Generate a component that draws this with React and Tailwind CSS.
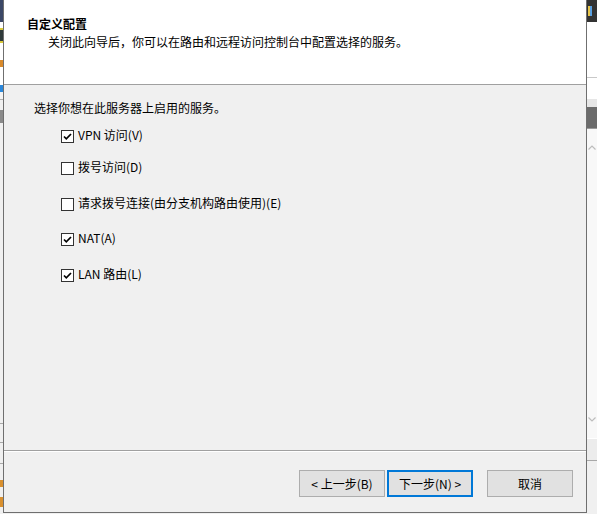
import React from 'react';

const font = { fontFamily: '"Noto Sans CJK SC", "Noto Sans", sans-serif' };

const services = [
  { label: 'VPN 访问(V)', checked: true, mt: 'mt-[14px]' },
  { label: '拨号访问(D)', checked: false, mt: 'mt-[19px]' },
  { label: '请求拨号连接(由分支机构路由使用)(E)', checked: false, mt: 'mt-[23px]' },
  { label: 'NAT(A)', checked: true, mt: 'mt-[22px]' },
  { label: 'LAN 路由(L)', checked: true, mt: 'mt-[23px]' },
];

const CheckBox = ({ checked }) => (
  <span className="w-[13px] h-[13px] border border-[#333] bg-white flex items-center justify-center shrink-0">
    {checked && (
      <svg width="11" height="11" viewBox="0 0 11 11">
        <path d="M2 5.5 L4.3 7.8 L9 3" fill="none" stroke="#000" strokeWidth="1.7" />
      </svg>
    )}
  </span>
);

const Button = ({ children, focused }) => (
  <button
    className={`w-[86px] h-[27px] text-[12px] text-black flex items-center justify-center bg-[#e1e1e1] ${
      focused ? 'border-2 border-[#0078d7]' : 'border border-[#adadad]'
    }`}
  >
    {children}
  </button>
);

// slivers of the windows behind the dialog
const LeftStrip = () => (
  <div className="w-[3px] flex flex-col bg-[#f0f0f0]">
    <div className="h-[22px] bg-[#3b4766]" />
    <div className="h-[6px] bg-white" />
    <div className="h-[15px] bg-[#2f3a3a] border-y-2 border-[#d8c83a]" />
    <div className="h-[17px] bg-white" />
    <div className="h-[7px] bg-[#d98a2b]" />
    <div className="h-[18px] bg-white" />
    <div className="h-[7px] bg-[#2a88dc]" />
    <div className="h-[8px] bg-[#f4f4f4] border-b border-[#b0b0b0]" />
    <div className="h-[10px]" />
    <div className="h-[13px] bg-[#8a8a8a]" />
    <div className="h-[300px]" />
    <div className="h-[19px] border-t border-[#a8a8a8]" />
    <div className="h-[21px] border-t border-[#a8a8a8]" />
    <div className="h-[17px] border-t border-[#a8a8a8]" />
    <div className="h-[7px] bg-[#d9902e]" />
    <div className="h-[10px]" />
    <div className="h-[10px] bg-[#d9902e]" />
  </div>
);

const RightStrip = () => (
  <div className="w-[10px] flex flex-col bg-[#f0f0f0]">
    <div className="h-[22px] bg-[#333] flex items-center justify-start pl-[1px]">
      <span className="w-[2px] h-[10px] bg-[#e8c64a]" />
      <span className="w-[2px] h-[10px] bg-[#5aa0e0]" />
    </div>
    <div className="h-[55px] bg-white" />
    <div className="h-[22px] bg-white border-t border-[#c8c8c8]" />
    <div className="h-[8px] bg-[#e6e6e6]" />
    <div className="h-[22px] bg-[#6b6b6b] border-b border-[#9a9a9a]" />
    <div className="h-[309px] bg-[#f8f8f8] flex flex-col items-center justify-between py-[16px]">
      <svg width="8" height="5" viewBox="0 0 8 5">
        <path d="M0.5 4.5 L4 1 L7.5 4.5" fill="none" stroke="#bdbdbd" strokeWidth="1.2" />
      </svg>
      <svg width="8" height="5" viewBox="0 0 8 5">
        <path d="M0.5 0.5 L4 4 L7.5 0.5" fill="none" stroke="#bdbdbd" strokeWidth="1.2" />
      </svg>
    </div>
    <div className="h-[23px] bg-[#ececec] border-t border-white border-b border-b-[#a8a8a8]" />
  </div>
);

export default function App() {
  return (
    <div className="w-[597px] h-[514px] flex bg-[#f0f0f0] overflow-hidden text-black" style={font}>
      <LeftStrip />
      <div className="w-[584px] h-[513px] flex flex-col border-l border-r border-b border-[#6f6f6f]">
        <div className="h-[85px] bg-white border-b border-[#a0a0a0] pt-[16px] pl-[23px] shrink-0">
          <div className="text-[12px] leading-4 font-bold">自定义配置</div>
          <div className="text-[12px] leading-4 mt-[2px] pl-[21px]">
            关闭此向导后，你可以在路由和远程访问控制台中配置选择的服务。
          </div>
        </div>

        <div className="flex-1 bg-[#f0f0f0] pt-[15px] pl-[30px]">
          <div className="text-[12px] leading-4">选择你想在此服务器上启用的服务。</div>
          <div className="flex flex-col pl-[27px]">
            {services.map((s) => (
              <label key={s.label} className={`${s.mt} h-[13px] flex items-center gap-[4px]`}>
                <CheckBox checked={s.checked} />
                <span className="text-[12px] leading-4 whitespace-nowrap pb-[3px]">{s.label}</span>
              </label>
            ))}
          </div>
        </div>

        <div className="h-[62px] border-t border-[#a0a0a0] shrink-0">
          <div className="h-full border-t border-white flex justify-end items-start pt-[18px] pr-[13px]">
            <Button>&lt; 上一步(B)</Button>
            <div className="ml-[2px]">
              <Button focused>下一步(N) &gt;</Button>
            </div>
            <div className="ml-[14px]">
              <Button>取消</Button>
            </div>
          </div>
        </div>
      </div>
      <RightStrip />
    </div>
  );
}
